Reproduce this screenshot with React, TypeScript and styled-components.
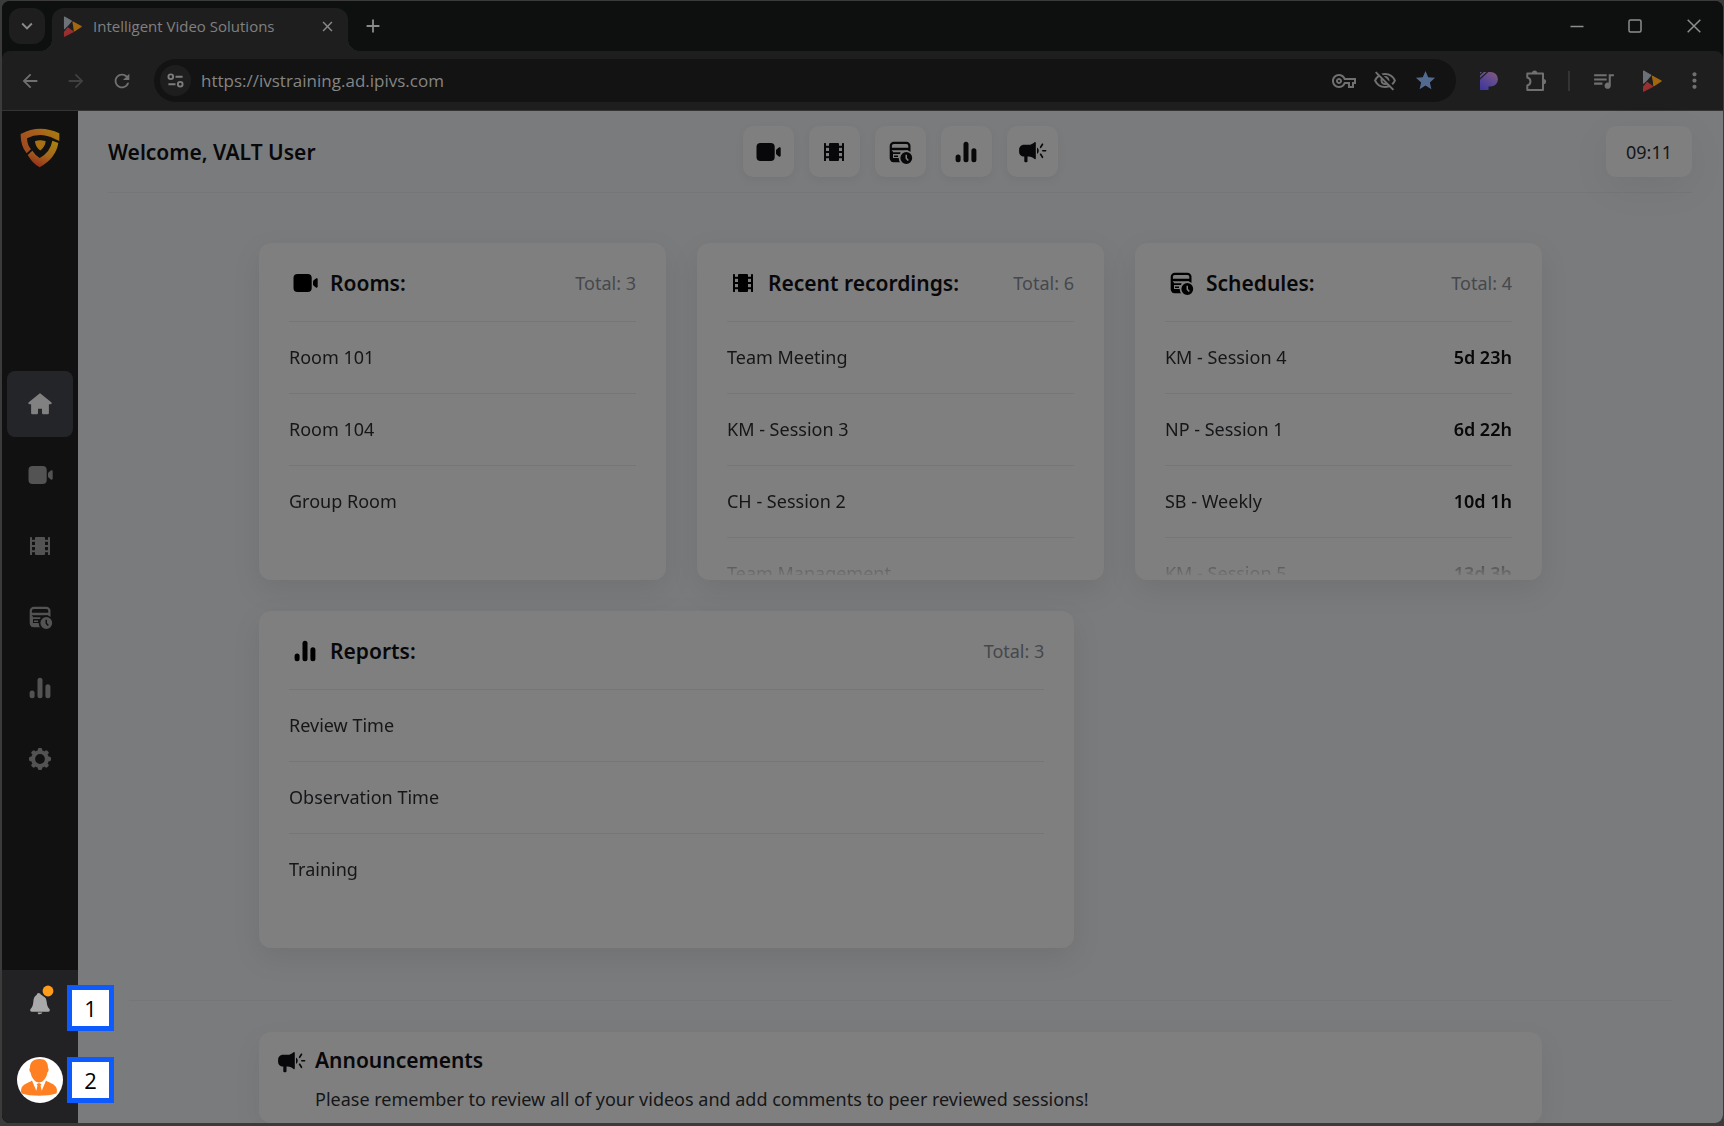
import React, { useId } from 'react';
import styled, { createGlobalStyle } from 'styled-components';
import {
  MdArrowBack,
  MdArrowForward,
  MdClose,
  MdExpandMore,
  MdAdd,
  MdMoreVert,
  MdOutlineVisibilityOff,
  MdOutlineVpnKey,
  MdQueueMusic,
  MdRefresh,
  MdStar,
} from 'react-icons/md';

const ui = '"Noto Sans", "Open Sans", sans-serif';
const chromeFont = '"Open Sans", "Noto Sans", sans-serif';

const c = {
  frame: '#3b3b3b',
  titleBar: '#0e100f',
  bar: '#1e1e1e',
  field: '#131313',
  chromeIcon: '#707070',
  chromeText: '#858585',
  page: '#7a7b7c',
  card: '#7f7f7f',
  line: '#757677',
  ink: '#08080a',
  text: '#151618',
  muted: '#45484c',
  side: '#111111',
  sideIcon: '#535353',
  sideActive: '#232529',
  sideFoot: '#222225',
  blue: '#0d5bff',
};

const GlobalStyle = createGlobalStyle`
  *, *::before, *::after { box-sizing: border-box; }
  body { margin: 0; background: ${c.frame}; font-family: ${ui}; }
  button, input { font: inherit; color: inherit; }
  h1, h2, p, ul { margin: 0; padding: 0; }
  ul { list-style: none; }
  a { color: inherit; text-decoration: none; }
`;

/* ---------- icons ---------- */

const Glyph = styled.svg.attrs({ 'aria-hidden': true, viewBox: '-16 -16 32 32', fill: 'currentColor' })`
  display: block;
  flex: none;
  width: 32px;
  height: 32px;
`;

const VideoIcon = () => (
  <Glyph>
    <rect x="-11.5" y="-9" width="18.2" height="18" rx="4" />
    <path d="M12.7-3.6v7.2c0 1-1 1.3-1.8.8L9 3.1c-.7-.5-1-1-1-1.8v-2.6c0-.8.3-1.3 1-1.8l1.900-1.300c.8-.5 1.800-.2 1.800.8Z" />
  </Glyph>
);

const FilmIcon = () => (
  <Glyph>
    <rect x="-10" y="-9" width="2" height="18" rx=".6" />
    <rect x="8" y="-9" width="2" height="18" rx=".6" />
    <rect x="-5" y="-9" width="10" height="18" rx="1" />
    {[-6.2, -1, 4.2].map((y) => (
      <rect key={y} x="-9" y={y} width="18" height="2" />
    ))}
  </Glyph>
);

const ScheduleIcon = () => {
  const id = useId();
  return (
    <Glyph>
      <mask id={id}>
        <rect x="-16" y="-16" width="32" height="32" fill="#fff" />
        <circle cx="6.3" cy="6" r="7.6" fill="#000" />
      </mask>
      <g mask={`url(#${id})`}>
        <rect x="-9.2" y="-9.2" width="18.6" height="18.4" rx="3" fill="none" stroke="currentColor" strokeWidth="2.2" />
        <path d="M-9-4.200H9v2.400H-9ZM-9 .2h9.500v1.800H-9ZM-9 6H3v3.600H-9Z" />
        <path d="M-9-.8h2v9h-2ZM-6 3.400h4v1.500h-4Z" />
      </g>
      <path
        fillRule="evenodd"
        d="M6.3.1a5.900 5.900 0 1 1 0 11.800 5.900 5.900 0 0 1 0-11.800ZM5.500 2.800v3.700l2.200 2.500 1.200-1L7 5.900V2.800Z"
      />
    </Glyph>
  );
};

const ReportsIcon = () => (
  <Glyph>
    <rect x="-10.4" y="2.6" width="5" height="7.7" rx="2.5" />
    <rect x="-2.5" y="-10.3" width="5" height="20.6" rx="2.5" />
    <rect x="5.4" y="-3.8" width="5" height="14.1" rx="2.5" />
  </Glyph>
);

const MegaphoneIcon = () => (
  <Glyph>
    <path d="M-8-7.200h4.500C-1-7.200 1-8.300 2.600-9.800c.5-.4 1.200-.2 1.200.5V6.600c0 .7-.7.9-1.200.5C1 5.700-1 4.600-3.500 4.600h-1v4.600c0 1.300-3.200 1.300-3.200 0V4.600H-8c-2.800 0-4.900-2.200-4.900-4.900v-2c0-2.700 2.100-4.900 4.900-4.900Z" />
    <path d="M5-4.600c2.300 1.500 2.300 5 0 6.500Z" />
    <path d="m8.600-4.700 1.900-3M10.800-1.200h2.800M8.600 2.300l1.900 3" stroke="currentColor" strokeWidth="1.6" strokeLinecap="round" />
  </Glyph>
);

const HomeIcon = () => (
  <Glyph>
    <path
      d="M0-9.400-10.500-.9h2.800v10h4.500V3.600h6.400v5.500h4.500v-10h2.800Z"
      stroke="currentColor"
      strokeWidth="2.4"
      strokeLinejoin="round"
    />
  </Glyph>
);

const GearIcon = () => (
  <Glyph>
    <circle r="6.9" fill="none" stroke="currentColor" strokeWidth="4" />
    {[0, 45, 90, 135, 180, 225, 270, 315].map((a) => (
      <rect key={a} x="-2.2" y="-11" width="4.4" height="4" rx="1.4" transform={`rotate(${a})`} />
    ))}
  </Glyph>
);

/* The glyph is drawn above the centre so that the unread dot clears the button's edge. */
const BellIcon = () => (
  <Glyph>
    <g transform="translate(0 -4)">
      <path d="M-1.500-11C0-11 .4-10.200 1-9.200 5-8.200 6.300-5.600 6.700-2 7 2 8 3.400 9.300 4.800c1 1.200.6 3-1.200 3H-8.100c-1.800 0-2.200-1.800-1.200-3C-8 3.400-7 2-6.700-2-6.500-5.600-5.500-8-3.200-9.200-3-10.200-2.500-11-1.500-11Z" />
      <path d="M-2.300 8.600h4.600C2 10-.9 11-2 9.800Z" />
      <circle cx="8" cy="-13" r="7.2" fill={c.sideFoot} />
      <circle cx="8" cy="-13" r="5.4" fill="#ff9c19" />
    </g>
  </Glyph>
);

const LogoSvg = styled.svg`
  display: block;
  width: 40px;
  height: 40px;
`;

const ShieldLogo = () => (
  <LogoSvg viewBox="-2 -1 120 118" role="img" aria-label="VALT">
    <defs>
      <linearGradient id="shieldTop" x1="0" y1="0.6" x2="1" y2="0">
        <stop offset="0" stopColor="#a04a20" />
        <stop offset="0.5" stopColor="#a85f1c" />
        <stop offset="1" stopColor="#a57f0c" />
      </linearGradient>
      <linearGradient id="shieldLow" x1="0.9" y1="0" x2="0.4" y2="1">
        <stop offset="0" stopColor="#a8820e" />
        <stop offset="0.55" stopColor="#a5681a" />
        <stop offset="1" stopColor="#97301c" />
      </linearGradient>
    </defs>
    <path fill="url(#shieldTop)" d="M0 16Q57-14 116 14V37L101 30Q58 8 19 29 20 50 31 62L18 74Q-1 50 0 16Z" />
    <path fill="url(#shieldLow)" d="M113 43Q106 88 57 116 36 105 21 79L35 66Q44 80 57 88 89 70 95 36Z" />
    <path fill="#a86f14" stroke="#a86f14" strokeWidth="4" strokeLinejoin="round" d="M45 39Q58 34 73 39 71 53 59 63 47 54 45 39Z" />
  </LogoSvg>
);

const PlaySvg = styled.svg<{ $size: number }>`
  display: block;
  flex: none;
  width: ${(p) => p.$size}px;
  height: ${(p) => p.$size}px;
`;

const PlayLogo = ({ size }: { size: number }) => (
  <PlaySvg $size={size} viewBox="0 0 60 60" aria-hidden="true">
    <g strokeWidth="3" strokeLinejoin="round">
      <path d="M7 3 27 14 17 26 7 36Z" fill="#6c7278" stroke="#6c7278" />
      <path d="M31 17 55 30 35 43Q34 28 31 17Z" fill="#a3680f" stroke="#a3680f" />
      <path d="M17 34 32 45 7 58V46Z" fill="#97302f" stroke="#97302f" />
    </g>
  </PlaySvg>
);

const PandoraIcon = () => (
  <svg viewBox="0 0 20 20" aria-hidden="true">
    <defs>
      <linearGradient id="pandora" x1="0.2" y1="1" x2="0.8" y2="0">
        <stop offset="0" stopColor="#40389a" />
        <stop offset="0.5" stopColor="#5c4894" />
        <stop offset="1" stopColor="#80587c" />
      </linearGradient>
    </defs>
    <path fill="url(#pandora)" d="M1 1h10.500a7.200 7 0 0 1 0 14.500H9.500V19H1Z" />
    <path d="M0 4.500 5 0M0 8.800 9.500 0" stroke={c.bar} strokeWidth="1.2" />
  </svg>
);

const PuzzleIcon = () => (
  <svg viewBox="0 0 22 22" fill="currentColor" aria-hidden="true">
    <path
      d="M2.300 3.500H18V20H2.300V15.500C6.500 14.500 6.500 8.500 2.300 7.500Z"
      fill="none"
      stroke="currentColor"
      strokeWidth="2"
      strokeLinejoin="round"
    />
    <path d="M7 3a2.600 2.600 0 0 1 5.200 0ZM18.500 9a2.600 2.600 0 0 1 0 5.200Z" />
  </svg>
);

const TuneIcon = () => (
  <svg viewBox="0 0 18 18" fill="none" stroke="#7d7d7d" strokeWidth="2" aria-hidden="true">
    <circle cx="4" cy="5" r="2.5" />
    <path d="M9 5h7.500M1.500 13H9" />
    <circle cx="14" cy="13" r="2.5" />
  </svg>
);

/* ---------- browser chrome ---------- */

const Frame = styled.div`
  display: flex;
  min-height: 100vh;
  padding: 1px 1px 3px 2px;
  background: ${c.frame};
`;

const Window = styled.div`
  display: flex;
  flex: 1;
  flex-direction: column;
  min-width: 0;
  overflow: hidden;
  border-radius: 8px;
  background: ${c.side};
`;

const TitleBar = styled.div`
  display: flex;
  align-items: flex-start;
  height: 50px;
  padding: 7px 0 0 7px;
  background: ${c.titleBar};
  color: #8a8a8a;
  font-family: ${chromeFont};
`;

const IconButton = styled.button<{ $w?: number; $h?: number; $icon?: number; $dim?: boolean }>`
  display: flex;
  flex: none;
  align-items: center;
  justify-content: center;
  width: ${(p) => p.$w ?? 36}px;
  height: ${(p) => p.$h ?? 36}px;
  padding: 0;
  border: 0;
  background: none;
  color: ${(p) => (p.$dim ? '#404040' : 'inherit')};

  > svg {
    width: ${(p) => p.$icon ?? 22}px;
    height: ${(p) => p.$icon ?? 22}px;
  }
`;

const TabSearch = styled(IconButton)`
  border-radius: 12px;
  background: ${c.bar};
`;

const Tab = styled.div`
  position: relative;
  display: flex;
  align-items: center;
  width: 296px;
  height: 43px;
  margin-left: 7px;
  padding: 0 8px 7px 10px;
  border-radius: 12px 12px 0 0;
  background: ${c.bar};

  &::before,
  &::after {
    content: '';
    position: absolute;
    bottom: 0;
    width: 12px;
    height: 12px;
  }
  &::before {
    right: 100%;
    background: radial-gradient(circle at 0 0, transparent 12px, ${c.bar} 12px);
  }
  &::after {
    left: 100%;
    background: radial-gradient(circle at 100% 0, transparent 12px, ${c.bar} 12px);
  }
`;

const TabTitle = styled.span`
  flex: 1;
  margin-left: 10px;
  font-size: 15px;
  line-height: 20px;
  white-space: nowrap;
  color: #808080;
`;

const NewTab = styled(IconButton)`
  margin-left: 7px;
`;

const WindowControls = styled.div`
  display: flex;
  margin-left: auto;
  color: #8d8d8d;
`;

const Toolbar = styled.div`
  display: flex;
  align-items: center;
  height: 60px;
  padding: 0 11px 0 8px;
  border-bottom: 1px solid #343434;
  border-radius: 8px 8px 0 0;
  background: ${c.bar};
  color: ${c.chromeIcon};
  font-family: ${chromeFont};
`;

const ToolbarWrap = styled.div`
  background: ${c.titleBar};
`;

const NavButtons = styled.div`
  display: flex;
  gap: 6px;
  margin-right: 12px;
`;

const AddressBar = styled.div`
  display: flex;
  flex: 1;
  align-items: center;
  min-width: 0;
  height: 43px;
  padding: 0 10px 0 6px;
  border-radius: 22px;
  background: ${c.field};
`;

const SiteInfo = styled(IconButton)`
  border-radius: 50%;
  background: ${c.bar};
`;

const UrlInput = styled.input`
  flex: 1;
  min-width: 0;
  margin-left: 10px;
  padding: 0;
  border: 0;
  outline: 0;
  background: none;
  color: ${c.chromeText};
  font-size: 17px;
  line-height: 24px;
`;

const Extensions = styled.div`
  display: flex;
  align-items: center;
  margin-left: 10px;
`;

const Separator = styled.span`
  width: 2px;
  height: 20px;
  margin: 0 8px;
  background: #343434;
`;

/* ---------- application ---------- */

const AppBody = styled.div`
  display: flex;
  flex: 1;
`;

const Sidebar = styled.aside`
  display: flex;
  flex: none;
  flex-direction: column;
  width: 76px;
  background: ${c.side};
`;

const LogoLink = styled.a`
  display: flex;
  justify-content: center;
  height: 82px;
  padding-top: 17px;
`;

const SideNav = styled.nav`
  display: flex;
  flex: 1;
  flex-direction: column;
  align-items: center;
  justify-content: center;
  gap: 5px;
`;

const SideLink = styled.a<{ $active?: boolean }>`
  display: flex;
  align-items: center;
  justify-content: center;
  width: 66px;
  height: 66px;
  border-radius: 8px;
  background: ${(p) => (p.$active ? c.sideActive : 'transparent')};
  color: ${(p) => (p.$active ? '#818181' : c.sideIcon)};
`;

const SideFoot = styled.div`
  display: flex;
  flex-direction: column;
  align-items: center;
  gap: 26px;
  padding: 15px 0 20px;
  background: ${c.sideFoot};
  color: #a9a9a9;
`;

const FootItem = styled.div`
  position: relative;
`;

const FootButton = styled.button`
  display: flex;
  align-items: center;
  justify-content: center;
  width: 46px;
  height: 46px;
  padding: 0;
  border: 0;
  border-radius: 50%;
  background: none;
`;

const Callout = styled.span`
  position: absolute;
  top: 0;
  left: 50px;
  z-index: 1;
  display: flex;
  align-items: center;
  justify-content: center;
  width: 47px;
  height: 46px;
  border: 5px solid ${c.blue};
  background: #fff;
  color: #000;
  font-family: "Open Sans", sans-serif;
  font-size: 22px;
  line-height: 28px;
`;

const BellWrap = styled.span`
  svg {
    overflow: visible;
  }
`;

const Main = styled.main`
  flex: 1;
  min-width: 0;
  background: ${c.page};
`;

const Header = styled.header`
  display: grid;
  grid-template-columns: 1fr auto 1fr;
  align-items: center;
  height: 82px;
  margin: 0 31px 0 30px;
  border-bottom: 1px solid ${c.line};
`;

const Welcome = styled.h1`
  color: ${c.ink};
  font-size: 21px;
  font-weight: 600;
  line-height: 28px;
`;

const Shortcuts = styled.nav`
  display: flex;
  gap: 15px;
`;

const Shortcut = styled.a`
  display: flex;
  align-items: center;
  justify-content: center;
  width: 51px;
  height: 51px;
  border-radius: 10px;
  background: ${c.card};
  box-shadow: 0 3px 10px rgba(0, 0, 20, 0.05);
  color: ${c.ink};
`;

const Clock = styled.time`
  justify-self: end;
  padding: 12px 20px 11px;
  border-radius: 10px;
  background: ${c.card};
  box-shadow: 0 10px 40px rgba(0, 0, 20, 0.06);
  color: ${c.text};
  font-size: 18px;
  line-height: 28px;
`;

const Section = styled.div`
  width: calc(100% - 60px);
  max-width: 1283px;
  margin: 0 auto;
`;

const Cards = styled(Section)`
  display: flex;
  flex-wrap: wrap;
  gap: 31px;
  padding: 50px 0 52px;
`;

const Card = styled.section<{ $wide?: boolean }>`
  width: ${(p) => (p.$wide ? 'calc((100% - 60px) * 2 / 3)' : 'calc((100% - 62px) / 3)')};
  height: 337px;
  padding: 0 30px;
  border-radius: 12px;
  background: ${c.card};
  box-shadow: 0 10px 30px rgba(0, 0, 20, 0.08);
`;

const CardHead = styled.div`
  display: flex;
  align-items: center;
  height: 79px;
  padding-top: 2px;
  border-bottom: 1px solid ${c.line};
`;

const CardTitle = styled.h2`
  flex: 1;
  margin-left: 9px;
  color: ${c.ink};
  font-size: 21px;
  font-weight: 600;
  line-height: 28px;
`;

const Total = styled.span`
  color: ${c.muted};
  font-size: 18px;
  line-height: 28px;
`;

const Items = styled.ul`
  height: 253px;
  overflow: hidden;
  mask-image: linear-gradient(#000 calc(100% - 34px), transparent calc(100% + 4px));
`;

const Item = styled.li`
  height: 72px;
  border-bottom: 1px solid ${c.line};
  color: ${c.text};
  font-size: 18px;
  line-height: 28px;

  &:last-child {
    border-bottom: 0;
  }
  > a {
    display: flex;
    align-items: center;
    justify-content: space-between;
    height: 100%;
    padding-bottom: 2px;
  }
  strong {
    color: ${c.ink};
    font-weight: 600;
  }
`;

const Divider = styled.hr`
  height: 1px;
  margin: 0 51px;
  border: 0;
  background: ${c.line};
`;

const Announcements = styled(Section)`
  display: flex;
  min-height: 91px;
  margin-top: 31px;
  padding: 14px 16px 8px;
  border-radius: 12px;
  background: ${c.card};
  box-shadow: 0 10px 30px rgba(0, 0, 20, 0.06);
  color: ${c.ink};
`;

const AnnouncementBody = styled.div`
  margin-left: 8px;
`;

const AnnouncementTitle = styled.h2`
  margin-bottom: 11px;
  font-size: 21px;
  font-weight: 600;
  line-height: 28px;
`;

const AnnouncementText = styled.p`
  color: ${c.text};
  font-size: 18px;
  line-height: 28px;
`;

type Entry = { name: string; due?: string };
type CardData = { title: string; total: number; icon: React.ReactNode; wide?: boolean; items: Entry[] };

const cards: CardData[] = [
  {
    title: 'Rooms:',
    total: 3,
    icon: <VideoIcon />,
    items: [{ name: 'Room 101' }, { name: 'Room 104' }, { name: 'Group Room' }],
  },
  {
    title: 'Recent recordings:',
    total: 6,
    icon: <FilmIcon />,
    items: [{ name: 'Team Meeting' }, { name: 'KM - Session 3' }, { name: 'CH - Session 2' }, { name: 'Team Management' }],
  },
  {
    title: 'Schedules:',
    total: 4,
    icon: <ScheduleIcon />,
    items: [
      { name: 'KM - Session 4', due: '5d 23h' },
      { name: 'NP - Session 1', due: '6d 22h' },
      { name: 'SB - Weekly', due: '10d 1h' },
      { name: 'KM - Session 5', due: '13d 3h' },
    ],
  },
  {
    title: 'Reports:',
    total: 3,
    icon: <ReportsIcon />,
    wide: true,
    items: [{ name: 'Review Time' }, { name: 'Observation Time' }, { name: 'Training' }],
  },
];

const sideLinks = [
  { label: 'Home', icon: <HomeIcon />, active: true },
  { label: 'Rooms', icon: <VideoIcon /> },
  { label: 'Recordings', icon: <FilmIcon /> },
  { label: 'Schedules', icon: <ScheduleIcon /> },
  { label: 'Reports', icon: <ReportsIcon /> },
  { label: 'Settings', icon: <GearIcon /> },
];

const shortcuts = [
  { label: 'Rooms', icon: <VideoIcon /> },
  { label: 'Recordings', icon: <FilmIcon /> },
  { label: 'Schedules', icon: <ScheduleIcon /> },
  { label: 'Reports', icon: <ReportsIcon /> },
  { label: 'Announcements', icon: <MegaphoneIcon /> },
];

const BrowserChrome = () => (
  <>
    <TitleBar>
      <TabSearch aria-label="Search tabs">
        <MdExpandMore />
      </TabSearch>
      <Tab>
        <PlayLogo size={21} />
        <TabTitle>Intelligent Video Solutions</TabTitle>
        <IconButton $w={26} $h={26} $icon={17} aria-label="Close tab">
          <MdClose />
        </IconButton>
      </Tab>
      <NewTab $icon={22} aria-label="New tab">
        <MdAdd />
      </NewTab>
      <WindowControls>
        <IconButton $w={59} $icon={14} aria-label="Minimize">
          <svg viewBox="0 0 14 14" stroke="currentColor" strokeWidth="1.5">
            <path d="M.5 7.500h13" />
          </svg>
        </IconButton>
        <IconButton $w={58} $icon={14} aria-label="Maximize">
          <svg viewBox="0 0 14 14" fill="none" stroke="currentColor" strokeWidth="1.5">
            <rect x="1" y="1" width="12" height="12" rx="1.5" />
          </svg>
        </IconButton>
        <IconButton $w={59} $icon={14} aria-label="Close window">
          <svg viewBox="0 0 14 14" stroke="currentColor" strokeWidth="1.5">
            <path d="m.7.7 12.600 12.600M13.300.7.7 13.300" />
          </svg>
        </IconButton>
      </WindowControls>
    </TitleBar>
    <ToolbarWrap>
      <Toolbar>
        <NavButtons>
          <IconButton $w={40} aria-label="Back">
            <MdArrowBack />
          </IconButton>
          <IconButton $w={40} $dim aria-label="Forward">
            <MdArrowForward />
          </IconButton>
          <IconButton $w={40} aria-label="Reload">
            <MdRefresh />
          </IconButton>
        </NavButtons>
        <AddressBar>
          <SiteInfo $w={31} $h={31} $icon={17} aria-label="View site information">
            <TuneIcon />
          </SiteInfo>
          <UrlInput type="text" aria-label="Address" defaultValue="https://ivstraining.ad.ipivs.com" />
          <IconButton $w={41} $icon={24} aria-label="Passwords">
            <MdOutlineVpnKey />
          </IconButton>
          <IconButton $w={41} $icon={24} aria-label="Third-party cookies blocked">
            <MdOutlineVisibilityOff />
          </IconButton>
          <IconButton $w={41} $icon={23} aria-label="Edit bookmark">
            <MdStar color="#536a90" />
          </IconButton>
        </AddressBar>
        <Extensions>
          <IconButton $w={46} $icon={20} aria-label="Pandora extension">
            <PandoraIcon />
          </IconButton>
          <IconButton $w={48} $icon={22} aria-label="Extensions">
            <PuzzleIcon />
          </IconButton>
          <Separator />
          <IconButton $w={50} $icon={25} aria-label="Media controls">
            <MdQueueMusic />
          </IconButton>
          <IconButton $w={48} aria-label="Profile">
            <PlayLogo size={22} />
          </IconButton>
          <IconButton $w={36} $icon={25} aria-label="Browser menu">
            <MdMoreVert />
          </IconButton>
        </Extensions>
      </Toolbar>
    </ToolbarWrap>
  </>
);

const Avatar = () => (
  <svg width="46" height="46" viewBox="0 0 46 46" aria-hidden="true">
    <circle cx="23" cy="23" r="23" fill="#fff" />
    <g fill="#ff8022">
      <path d="M22 2c6-.4 9.200 3 9 9 1 .3.800 3.800-.6 4.500C29.500 21 26 25.500 22 25.500S14.500 21 13.600 15.500C12.300 14.800 12 11.300 13 11 12.800 5.500 16 2.300 22 2Z" />
      <path d="M15 23.500c-1 1.500-9 3-10.500 7.500-.8 2.300-.5 4.500.2 5.500 9.300 3 25.300 3 34.600 0 .7-1 1-3.200.2-5.500C38 26.500 30 25 29 23.500l-4.300 10.300-1.200-5.300 1-1.300L22 25.900l-2.500 1.300 1 1.300-1.200 5.300Z" />
    </g>
  </svg>
);

export default function App() {
  return (
    <Frame>
      <GlobalStyle />
      <Window>
        <BrowserChrome />
        <AppBody>
          <Sidebar>
            <LogoLink href="#home" aria-label="VALT">
              <ShieldLogo />
            </LogoLink>
            <SideNav aria-label="Main">
              {sideLinks.map((l) => (
                <SideLink key={l.label} href="#" aria-label={l.label} $active={l.active}>
                  {l.icon}
                </SideLink>
              ))}
            </SideNav>
            <SideFoot>
              <FootItem>
                <FootButton aria-label="Notifications">
                  <BellWrap>
                    <BellIcon />
                  </BellWrap>
                </FootButton>
                <Callout>1</Callout>
              </FootItem>
              <FootItem>
                <FootButton aria-label="Profile">
                  <Avatar />
                </FootButton>
                <Callout>2</Callout>
              </FootItem>
            </SideFoot>
          </Sidebar>
          <Main>
            <Header>
              <Welcome>Welcome, VALT User</Welcome>
              <Shortcuts aria-label="Shortcuts">
                {shortcuts.map((s) => (
                  <Shortcut key={s.label} href="#" aria-label={s.label}>
                    {s.icon}
                  </Shortcut>
                ))}
              </Shortcuts>
              <Clock>09:11</Clock>
            </Header>
            <Cards>
              {cards.map((card) => (
                <Card key={card.title} $wide={card.wide}>
                  <CardHead>
                    {card.icon}
                    <CardTitle>{card.title}</CardTitle>
                    <Total>Total: {card.total}</Total>
                  </CardHead>
                  <Items>
                    {card.items.map((it) => (
                      <Item key={it.name}>
                        <a href="#">
                          {it.name}
                          {it.due && <strong>{it.due}</strong>}
                        </a>
                      </Item>
                    ))}
                  </Items>
                </Card>
              ))}
            </Cards>
            <Divider />
            <Announcements as="section">
              <MegaphoneIcon />
              <AnnouncementBody>
                <AnnouncementTitle>Announcements</AnnouncementTitle>
                <AnnouncementText>
                  Please remember to review all of your videos and add comments to peer reviewed sessions!
                </AnnouncementText>
              </AnnouncementBody>
            </Announcements>
          </Main>
        </AppBody>
      </Window>
    </Frame>
  );
}
